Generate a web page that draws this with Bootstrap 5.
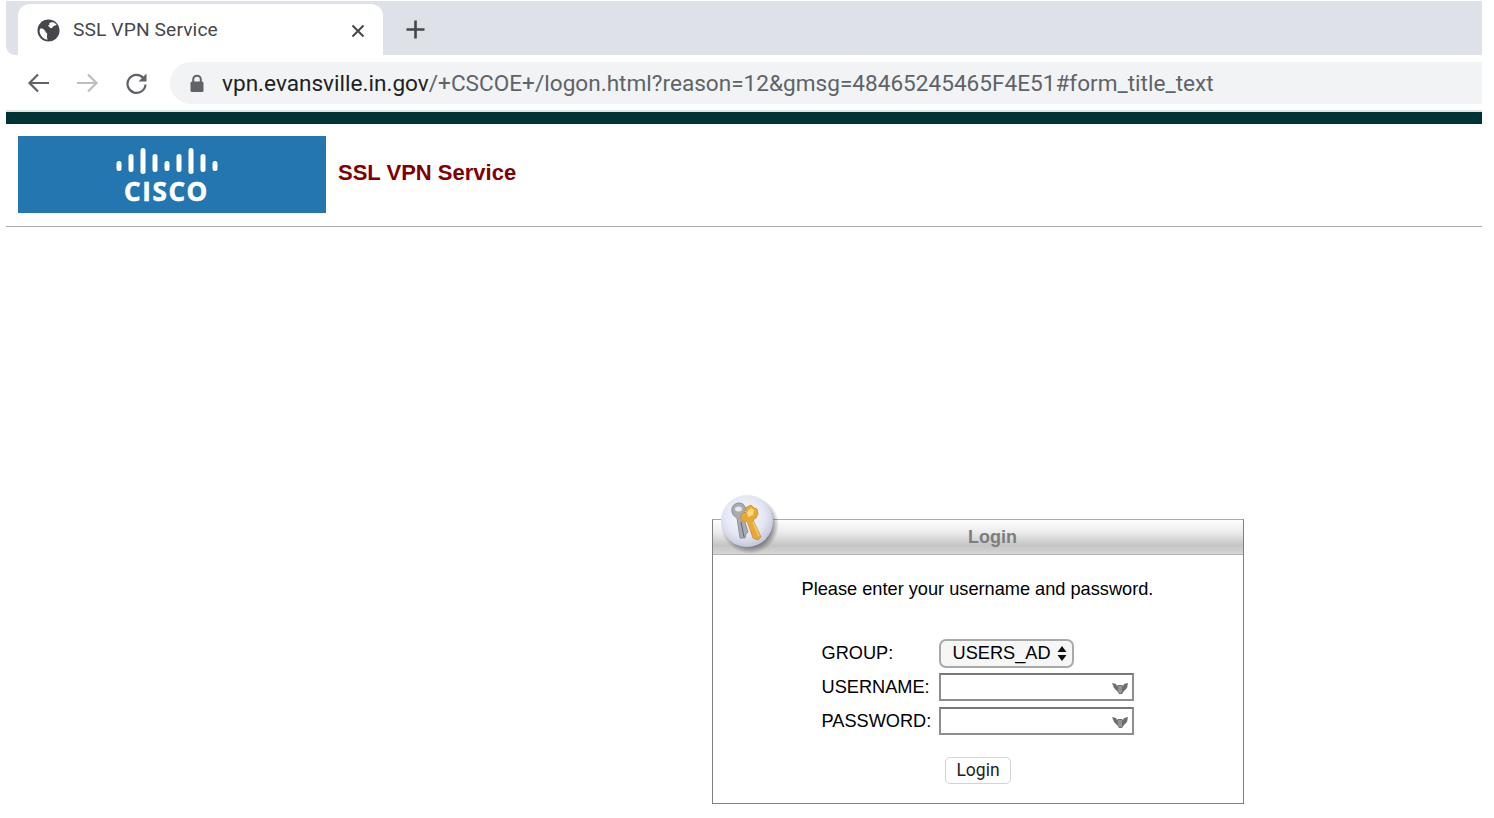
<!DOCTYPE html>
<html lang="en">
<head>
<meta charset="utf-8">
<title>SSL VPN Service</title>
<link href="https://cdn.jsdelivr.net/npm/bootstrap@5.3.0/dist/css/bootstrap.min.css" rel="stylesheet">
<style>
html,body{height:100%;overflow:hidden;background:#fff}
body{font-family:"Liberation Sans",Arial,sans-serif;color:#000}
.shot{margin:1px 12px 0 6px;height:817px}
.tabstrip{height:54px;background:#dee1e7;padding:3px 0 0 12px;border-bottom-left-radius:9px}
.brtab{width:365px;height:51px;background:#fff;border-radius:12px 12px 0 0;padding:2px 18px 0 19px;color:#45474a;font-size:19.2px;gap:13px}
.tabtitle{flex:1;font-family:Roboto,"Liberation Sans",sans-serif;letter-spacing:.12px}
.newtab{margin-left:22px;padding-top:0}
.toolbar{height:55px;padding:7px 0 6px 0;background:#fff}
.navicons{width:164px;padding-left:21px;gap:26px}
.omnibox{height:42px;background:#f1f3f4;border-radius:21px 0 0 21px;padding:2px 0 0 19px;gap:17px;font-family:Roboto,"Liberation Sans",sans-serif;font-size:22.6px;color:#5f6368;white-space:nowrap}
.omnibox b{font-weight:400;color:#202124}
.omnibox svg{margin-top:-2px}
.brline{height:2px;background:#e3e4e6}
.topband{height:12px;background:#003333}
.headrow{padding:12px 0 12px 12px;gap:12px;border-bottom:1px solid #aaa;height:103px}
.ciscobox{width:308px;height:77px;background:#2476b0;color:#fff;padding:12px 11px 0 0}
.ciscoword{font-family:"Open Sans","Liberation Sans",sans-serif;font-weight:700;font-size:26px;line-height:22px;letter-spacing:1.6px;margin-top:5px;-webkit-text-stroke:.6px #fff}
.sitetitle{font-size:22px;font-weight:700;color:#800000;margin:-5px 0 0 0;line-height:26px}
.loginwrap{padding:292px 0 0 706px}
.loginpanel{width:532px;height:285px;border:1px solid #808080;border-top-color:#aaa;position:relative}
.paneltitle{height:35px;background:linear-gradient(#fdfdfd 0%,#ededed 35%,#c4c4c4 75%,#d6d6d6 100%);border-bottom:1px solid #b5b5b5;font-size:18px;font-weight:700;color:#7d7d7d;text-align:center;line-height:34px;padding-left:29px}
.keybadge{position:absolute;left:2px;top:-30px;width:66px;height:66px}
.prompt{font-size:18.2px;text-align:center;margin:23px 1px 0 0;line-height:22px}
.formgrid{display:grid;grid-template-columns:117px 195px;margin:36px 0 0 108.5px;font-size:18.2px;align-items:center}
.formgrid label{margin:0;line-height:22px}
.rowsel{height:34px}
.rowtxt{height:34px}
.fakeselect{width:135px;height:29px;border:2px solid #a9a9a9;border-radius:7px;background:#f6f6f6;padding:0 5px 0 12px;font-size:18.2px;line-height:25px;margin-top:0}
.fakeinput{position:relative;width:196px;height:28px;border:2px solid #8e8e8e;border-top-color:#777;background:#fff}
.fakeinput input{width:100%;height:100%;border:0;background:transparent;outline:0;padding:0 4px}
.fakeinput svg{position:absolute;right:4px;top:6px}
.loginbtn{display:block;width:66px;height:27px;margin:19px 0 0 232px;padding:0;background:#fff;border:1px solid #d4d4d4;border-radius:5px;font-size:17.5px;line-height:25px;color:#222;font-family:Roboto,"Liberation Sans",sans-serif}
</style>
</head>
<body>
<div class="shot">
  <div class="tabstrip d-flex">
    <div class="brtab d-flex align-items-center">
      <svg width="23" height="23" viewBox="0 0 24 24" class="flex-shrink-0"><circle cx="12" cy="12" r="11.500" fill="#45474a"/><path d="M3.500 10c2-.5 3 .2 4.500 1.700 1 1 .6 2.300 2 3 .9.500.6 2 .4 3.300-.2 1.200.2 2.300.8 3.500-4-.4-7.800-3.500-8.500-8.500-.1-1 .1-2 .8-3zM13 4c1.600-.6 3.300-.8 5-.2 1 .6 1.900 1.300 2.500 2.200-1 1-2.400.8-3.300 1.500-1 .8-1.300 2.300-2.800 2-1.200-.2-1-1.500-2.200-1.800-.8-.2-.4-1.400.8-1.700z" fill="#fff"/></svg>
      <span class="tabtitle">SSL VPN Service</span>
      <svg width="14" height="14" viewBox="0 0 14 14"><path d="M1.500 1.500l11 11M12.500 1.500l-11 11" stroke="#45474a" stroke-width="2"/></svg>
    </div>
    <div class="newtab d-flex align-items-center">
      <svg width="21" height="21" viewBox="0 0 21 21"><path d="M10.500 1.500v18M1.500 10.500h18" stroke="#45474a" stroke-width="2.600"/></svg>
    </div>
  </div>
  <div class="toolbar d-flex">
    <div class="navicons d-flex align-items-center">
      <svg width="23" height="20" viewBox="0 0 23 20"><path d="M22 10H3M11 1.500 2.500 10l8.500 8.500" fill="none" stroke="#5f6368" stroke-width="2.200"/></svg>
      <svg width="23" height="20" viewBox="0 0 23 20"><path d="M1 10h19M12 1.500l8.500 8.500-8.500 8.500" fill="none" stroke="#bcbec2" stroke-width="2.200"/></svg>
      <svg width="23" height="23" viewBox="0 0 23 23"><path d="M18.500 6.200A9 9 0 1 0 20.500 12.500" fill="none" stroke="#5f6368" stroke-width="2.200"/><path d="M21.500 1.500v8h-8z" fill="#5f6368"/></svg>
    </div>
    <div class="omnibox d-flex align-items-center flex-grow-1">
      <svg width="16" height="19" viewBox="0 0 16 19" class="flex-shrink-0"><path d="M4.200 8V5.500a3.800 3.800 0 0 1 7.600 0V8" fill="none" stroke="#5f6368" stroke-width="2"/><rect x="1.500" y="7.500" width="13" height="10.500" rx="1.500" fill="#5f6368"/></svg>
      <span><b>vpn.evansville.in.gov</b>/+CSCOE+/logon.html?reason=12&amp;gmsg=48465245465F4E51#form_title_text</span>
    </div>
  </div>
  <div class="brline"></div>
  <div class="topband"></div>
  <div class="headrow d-flex align-items-center">
    <div class="ciscobox d-flex flex-column align-items-center flex-shrink-0 align-self-start">
      <svg width="102" height="27" viewBox="0 0 102 27" fill="#fff"><rect x=".5" y="13" width="5" height="10" rx="2.500"/><rect x="12.500" y="6" width="5" height="18" rx="2.500"/><rect x="24.500" y="0" width="5" height="26" rx="2.500"/><rect x="36.500" y="6" width="5" height="18" rx="2.500"/><rect x="48.500" y="13" width="5" height="10" rx="2.500"/><rect x="60.500" y="6" width="5" height="18" rx="2.500"/><rect x="72.500" y="0" width="5" height="26" rx="2.500"/><rect x="84.500" y="6" width="5" height="18" rx="2.500"/><rect x="96.500" y="13" width="5" height="10" rx="2.500"/></svg>
      <div class="ciscoword">CISCO</div>
    </div>
    <h1 class="sitetitle">SSL VPN Service</h1>
  </div>
  <div class="loginwrap">
    <div class="loginpanel">
      <svg class="keybadge" viewBox="0 0 66 66">
        <defs>
          <radialGradient id="orb" cx=".45" cy=".4" r=".65"><stop offset="0" stop-color="#fbfbfe"/><stop offset=".6" stop-color="#e4e7f3"/><stop offset="1" stop-color="#bcc1d8"/></radialGradient>
          <radialGradient id="shade" cx=".5" cy=".5" r=".5"><stop offset=".75" stop-color="#555" stop-opacity=".65"/><stop offset="1" stop-color="#555" stop-opacity="0"/></radialGradient>
        </defs>
        <circle cx="35" cy="35" r="29" fill="url(#shade)"/>
        <circle cx="32" cy="31" r="26" fill="url(#orb)"/>
        <path d="M24 13c-5 0-8 4-7 9 .5 3 3 5 5 6l3 20h5l1-4 2-2-5-17c2-2 3-5 2-8-.8-2.500-3-4-6-4z" fill="#a9abb3" stroke="#7f818a" stroke-width=".8"/>
        <ellipse cx="23.500" cy="19" rx="3.500" ry="2.500" fill="#e6e7ef"/>
        <path d="M26 32l3 15" stroke="#6d6f78" stroke-width="1.200"/>
        <path d="M26 24l6-2-2-4 6-3 3 3 3 1 1 5-2 4-3 2 8 17-3 3-3-1-2-1-6-17-3 1-3-2z" fill="#e9a938" stroke="#cf8c22" stroke-width=".8"/>
        <path d="M32 22l4-4 3 2-1 5-5 2z" fill="#fbdc83"/>
        <path d="M38 32l6 14" stroke="#f7cd68" stroke-width="1.500"/>
      </svg>
      <div class="paneltitle">Login</div>
      <p class="prompt">Please enter your username and password.</p>
      <form class="formgrid">
        <label class="rowsel d-flex align-items-center" for="grp">GROUP:</label>
        <div class="rowsel d-flex align-items-center">
          <div class="fakeselect d-flex align-items-center justify-content-between" id="grp">
            <span>USERS_AD</span>
            <svg width="10" height="17" viewBox="0 0 10 17" fill="#111"><path d="M5 1l4.500 6h-9zM5 16l4.500-6h-9z"/></svg>
          </div>
        </div>
        <label class="rowtxt d-flex align-items-center" for="usr">USERNAME:</label>
        <div class="rowtxt d-flex align-items-center">
          <div class="fakeinput"><input id="usr" type="text">
            <svg width="16" height="14" viewBox="0 0 16 14" fill="#6e6e6e"><path d="M0 2l4 1 1 2 1-1h4l1 1 1-2 4-1-1 5-3 3-2 3H7L5 10 2 7z"/><path d="M7 5v7M9 5v7" stroke="#ccc" stroke-width=".8"/></svg>
          </div>
        </div>
        <label class="rowtxt d-flex align-items-center" for="pwd">PASSWORD:</label>
        <div class="rowtxt d-flex align-items-center">
          <div class="fakeinput"><input id="pwd" type="password">
            <svg width="16" height="14" viewBox="0 0 16 14" fill="#6e6e6e"><path d="M0 2l4 1 1 2 1-1h4l1 1 1-2 4-1-1 5-3 3-2 3H7L5 10 2 7z"/><path d="M7 5v7M9 5v7" stroke="#ccc" stroke-width=".8"/></svg>
          </div>
        </div>
      </form>
      <button type="button" class="loginbtn">Login</button>
    </div>
  </div>
</div>
<script src="https://cdn.jsdelivr.net/npm/bootstrap@5.3.0/dist/js/bootstrap.bundle.min.js"></script>
</body>
</html>
